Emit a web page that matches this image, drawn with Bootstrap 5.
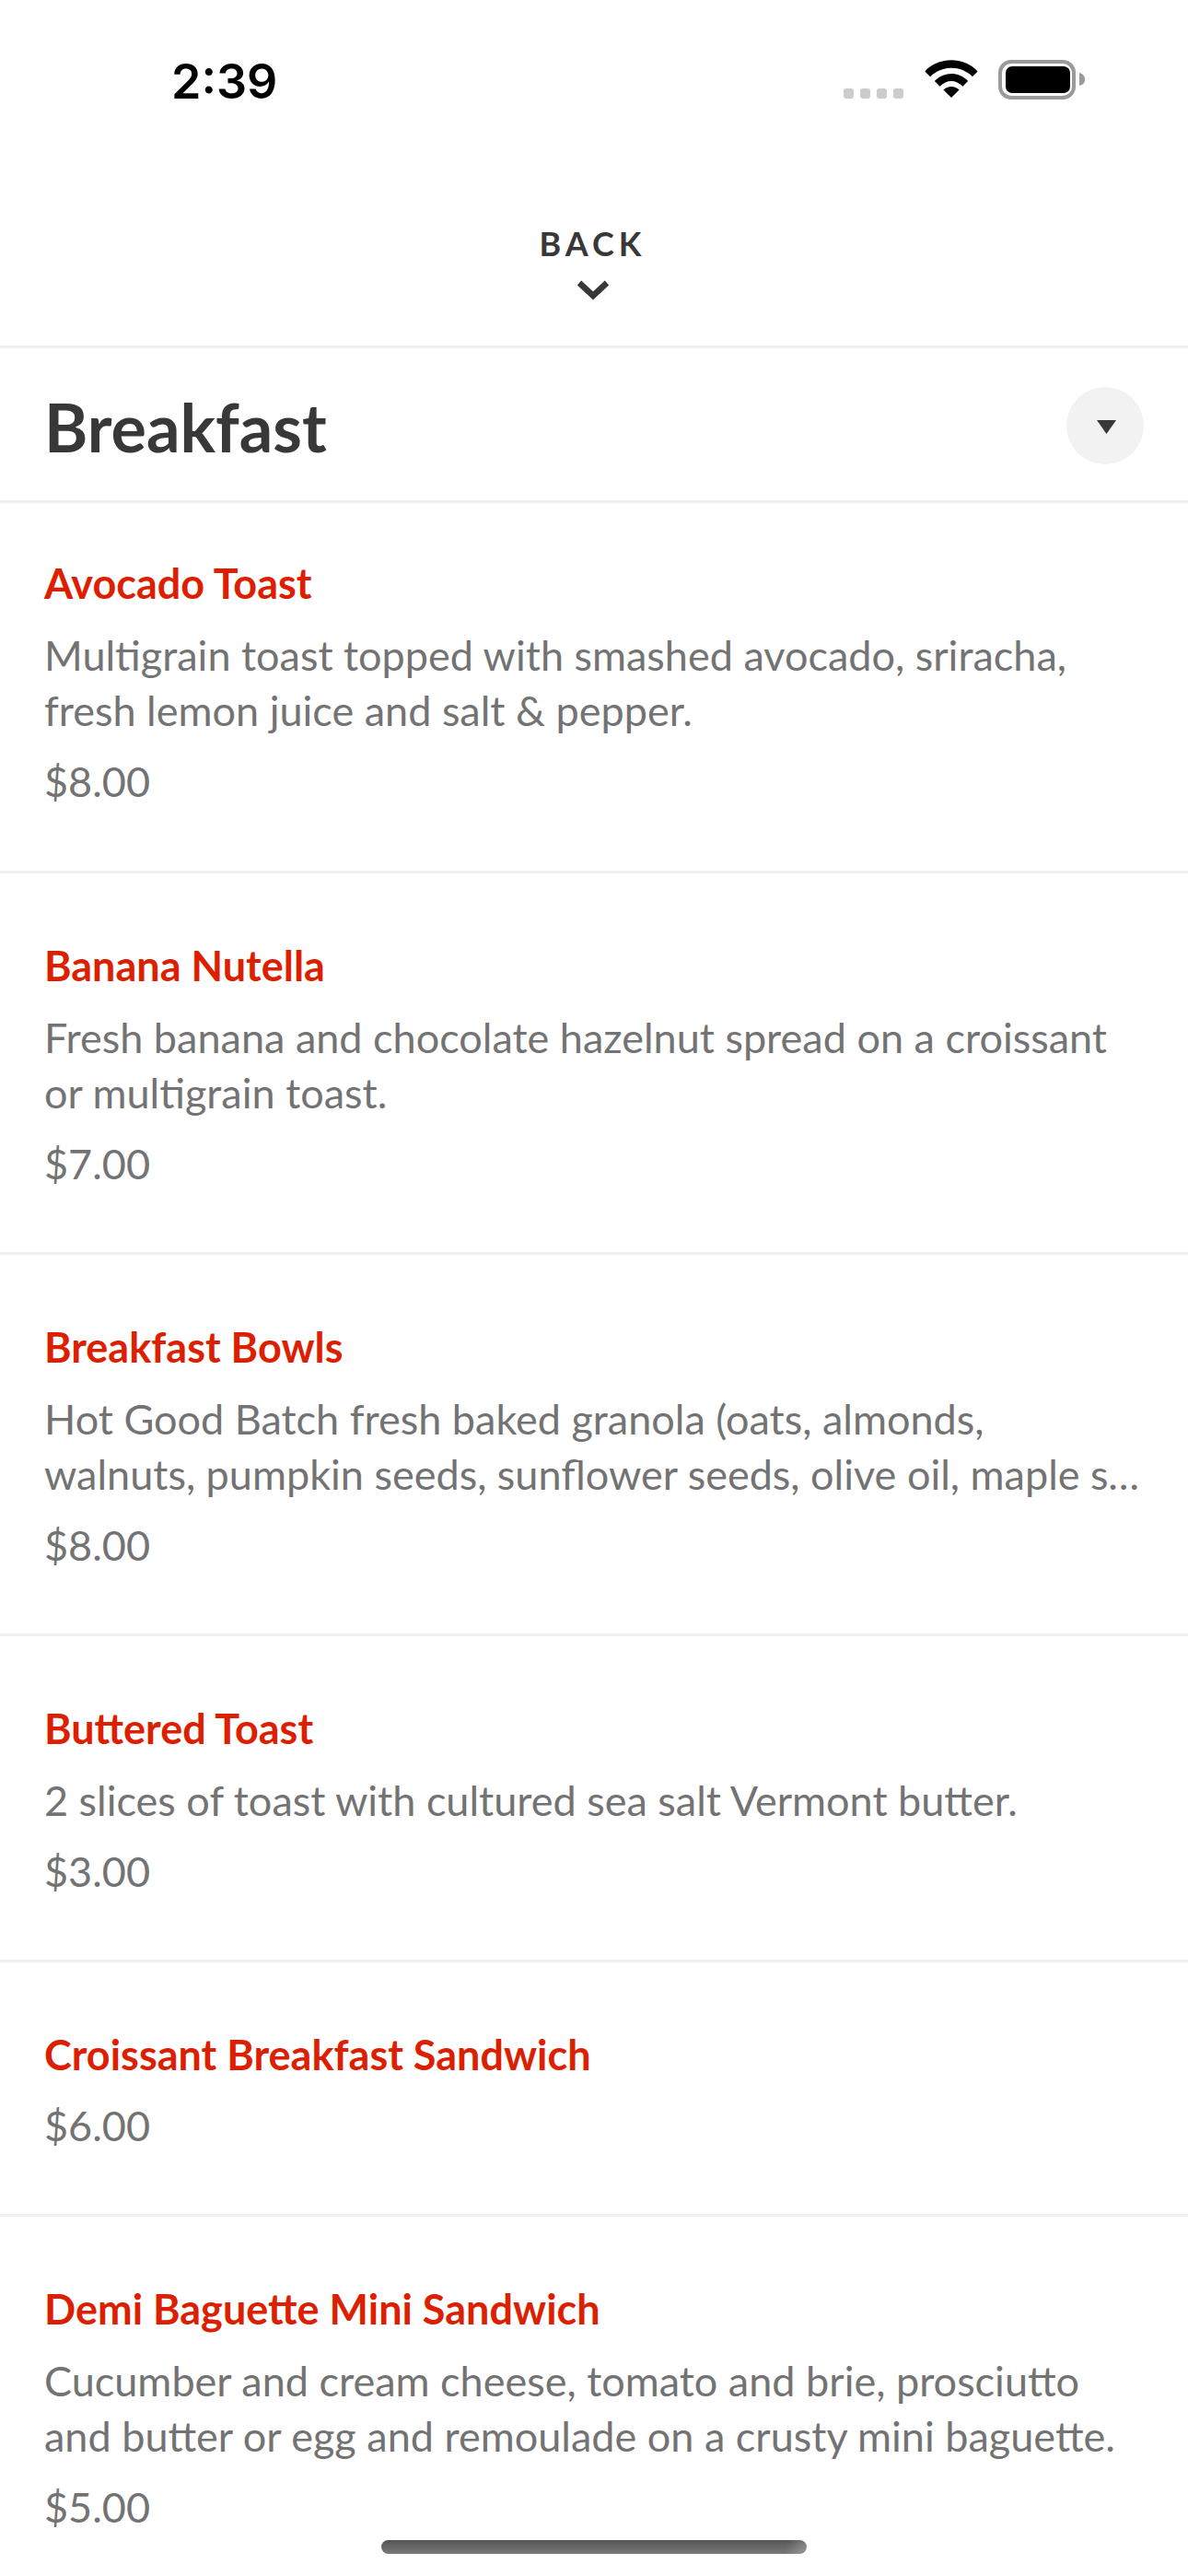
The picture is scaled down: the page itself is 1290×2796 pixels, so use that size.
<!DOCTYPE html>
<html lang="en">
<head>
  <meta charset="UTF-8"/>
  <meta name="viewport" content="width=device-width, initial-scale=1.0"/>
  <title>Breakfast Menu</title>
  <link href="https://cdn.jsdelivr.net/npm/bootstrap@5.3.3/dist/css/bootstrap.min.css" rel="stylesheet"/>
  <style>
    body { height: 2796px; overflow: hidden; background: #fff; font-family: Lato, "Open Sans", sans-serif; color: #333; position: relative; }
    .status-row { height: 242px; padding: 62px 112px 0 186px; }
    .clock { font-family: Inter, "Liberation Sans", sans-serif; font-weight: 600; font-size: 52px; line-height: 54px; color: #000; }
    .signal-dot { width: 11px; height: 11px; border-radius: 3px; background: #ccc; }
    .signal-dots { gap: 7px; padding-top: 34px; margin-right: 23px; }
    .wifi-icon { margin-top: 3px; margin-right: 22px; }
    .batt-icon { margin-top: 3px; }
    .back-bar { height: 136px; padding-right: 3px; border-bottom: 3px solid #f0f0f0; }
    .back-label { font-size: 36px; line-height: 44px; font-weight: 700; letter-spacing: 5px; color: #383838; }
    .back-chevron { margin-top: 17px; }
    .section-head { height: 168px; padding: 2px 48px 0; border-bottom: 3px solid #f0f0f0; }
    .section-title { font-size: 72px; line-height: 86px; font-weight: 700; color: #383838; margin: 2px 0 0; }
    .toggle-btn { width: 84px; height: 84px; background: #f2f2f2; padding: 0; border: 0; }
    .toggle-btn svg { margin: 3px 0 0 3px; }
    .list-group-flush > .menu-row { padding: 72px 48px 66px; border-color: #f0f0f0; border-width: 0 0 3px; }
    .list-group-flush > .menu-row.first-row { padding-top: 59px; padding-bottom: 67px; }
    .dish-name { font-size: 45px; line-height: 56px; font-weight: 700; color: #dc1f00; margin: 0 0 20px; }
    .dish-desc { font-size: 45px; line-height: 60px; color: #737373; margin: 0 0 17px; }
    .dish-price { font-size: 45px; line-height: 60px; color: #737373; margin: 0; }
    .dish-name + .dish-price { margin-top: -1px; }
    .home-bar { position: absolute; left: 414px; top: 2757px; width: 462px; height: 15px; border-radius: 8px; background: linear-gradient(100deg, transparent 95%, rgba(255,255,255,.25)), linear-gradient(#555, #7a7a7a); }
  </style>
</head>
<body>
  <!-- Status bar -->
  <div class="status-row d-flex justify-content-between align-items-start">
    <div class="clock">2:39</div>
    <div class="d-flex align-items-start">
      <div class="signal-dots d-flex">
        <span class="signal-dot"></span><span class="signal-dot"></span><span class="signal-dot"></span><span class="signal-dot"></span>
      </div>
      <svg class="wifi-icon" width="58" height="42" viewBox="0 0 60 44" fill="#000">
        <path d="M0 13 C16 -4 44 -4 60 13 L54 19 C41 6 19 6 6 19 Z"/>
        <path d="M11 24 C22 13 38 13 49 24 L43 30 C35 22 25 22 17 30 Z"/>
        <path d="M21 34 C26 29 34 29 39 34 L30 43 Z"/>
      </svg>
      <svg class="batt-icon" width="94" height="43" viewBox="0 0 94 43">
        <rect x="2" y="2" width="80" height="39" rx="12" fill="none" stroke="#9a9a9a" stroke-width="4"/>
        <rect x="8" y="7" width="70" height="29" rx="7" fill="#000"/>
        <path d="M88 14 C92 15 94 18 94 21 C94 25 92 27 88 28 Z" fill="#9a9a9a"/>
      </svg>
    </div>
  </div>

  <!-- Back -->
  <div class="back-bar d-flex flex-column align-items-center">
    <div class="back-label">BACK</div>
    <svg class="back-chevron" width="36" height="24" viewBox="0 0 36 24"><path d="M3 4 L18 18 L33 4" fill="none" stroke="#383838" stroke-width="6.5"/></svg>
  </div>

  <!-- Section header -->
  <div class="section-head d-flex justify-content-between align-items-center">
    <h1 class="section-title">Breakfast</h1>
    <button class="toggle-btn rounded-circle d-flex align-items-center justify-content-center" type="button">
      <svg width="21" height="15" viewBox="0 0 21 15"><path d="M0 0 H21 L10.5 15 Z" fill="#383838"/></svg>
    </button>
  </div>

  <!-- Items -->
  <div class="list-group list-group-flush" id="menuList"></div>

  <div class="home-bar"></div>

  <script src="https://cdn.jsdelivr.net/npm/bootstrap@5.3.3/dist/js/bootstrap.bundle.min.js"></script>
  <script>
    const items = [
      { name: "Avocado Toast", desc: "Multigrain toast topped with smashed avocado, sriracha, fresh lemon juice and salt &amp; pepper.", price: "$8.00" },
      { name: "Banana Nutella", desc: "Fresh banana and chocolate hazelnut spread on a croissant or multigrain toast.", price: "$7.00" },
      { name: "Breakfast Bowls", desc: "Hot Good Batch fresh baked granola (oats, almonds,", tail: "walnuts, pumpkin seeds, sunflower seeds, olive oil, maple syrup, coconut and sea salt", price: "$8.00" },
      { name: "Buttered Toast", desc: "2 slices of toast with cultured sea salt Vermont butter.", price: "$3.00" },
      { name: "Croissant Breakfast Sandwich", price: "$6.00" },
      { name: "Demi Baguette Mini Sandwich", desc: "Cucumber and cream cheese, tomato and brie, prosciutto and butter or egg and remoulade on a crusty mini baguette.", price: "$5.00" }
    ];
    const list = document.getElementById("menuList");
    items.forEach((it, i) => {
      const row = document.createElement("div");
      row.className = "list-group-item menu-row" + (i === 0 ? " first-row" : "");
      let html = `<h2 class="dish-name">${it.name}</h2>`;
      if (it.desc) {
        const tail = it.tail ? `<span class="d-block text-truncate">${it.tail}</span>` : "";
        html += `<p class="dish-desc">${it.desc}${tail}</p>`;
      }
      html += `<p class="dish-price">${it.price}</p>`;
      row.innerHTML = html;
      list.appendChild(row);
    });
  </script>
</body>
</html>
